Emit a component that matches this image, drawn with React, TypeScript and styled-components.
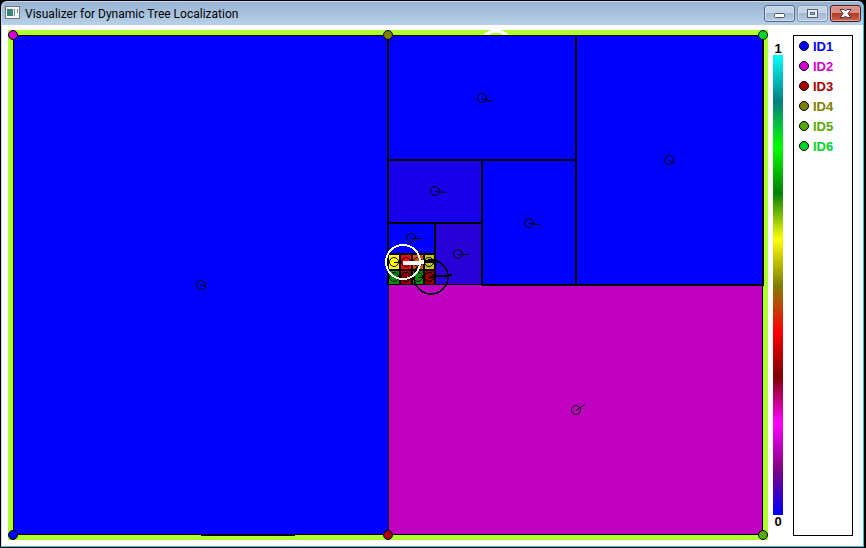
import React from "react";
import styled, { createGlobalStyle } from "styled-components";

const GlobalStyle = createGlobalStyle`
  * { box-sizing: border-box; }
  body { margin: 0; background: #000; }
`;

const Window = styled.main`
  display: flex;
  flex-direction: column;
  min-height: 100vh;
  padding: 1px 2px 1px 1px;
  background: #000;
  font-family: "Liberation Sans", Arial, sans-serif;
`;

const Frame = styled.div`
  flex: 1;
  display: flex;
  flex-direction: column;
  border: 1px solid #c4dcf2;
  border-right-color: #35bfdc;
  border-bottom-color: #35bfdc;
  border-radius: 6px 6px 0 0;
  overflow: hidden;
  background: #fff;
`;

const TitleBar = styled.header`
  display: flex;
  align-items: flex-start;
  height: 23px;
  padding: 0 2px 0 3px;
  background: linear-gradient(#98b3d1, #b7d0ea);
`;

const AppIcon = styled.svg`
  display: block;
  margin-top: 4px;
`;

const Title = styled.h1`
  flex: 1;
  margin: 0 0 0 5px;
  font: 400 12px/24px Roboto, "Open Sans", sans-serif;
  color: #000;
  white-space: nowrap;
`;

const Controls = styled.div`
  display: flex;
  gap: 2px;
  margin-top: 3px;
`;

const ControlButton = styled.button<{ $kind: "normal" | "muted" | "close" }>`
  display: grid;
  place-items: center;
  width: 31px;
  height: 17px;
  padding: 0;
  border: 1px solid ${(p) => (p.$kind === "close" ? "#4d1a20" : p.$kind === "muted" ? "#8296ae" : "#566a84")};
  border-radius: 3px;
  box-shadow: inset 0 0 0 1px ${(p) => (p.$kind === "close" ? "#dfa398" : "#cfdeee")};
  background: ${(p) =>
    p.$kind === "close"
      ? "linear-gradient(#d98f83 0 45%, #b83a26 50%, #c8634c)"
      : "linear-gradient(#c3d4e7 0 45%, #a3b9d2 50%, #b7cce3)"};
`;

const Content = styled.div`
  flex: 1;
  display: flex;
  align-items: flex-start;
  padding: 5px 10px 6px 6px;
`;

const MapArea = styled.svg`
  display: block;
  flex: 1;
  min-width: 0;
  height: auto;
`;

const Scale = styled.div`
  align-self: stretch;
  display: flex;
  flex-direction: column;
  align-items: center;
  width: 10px;
  margin: 12px 10px 12px 5px;
  font: 700 13px/13px "Liberation Sans", Arial, sans-serif;
  color: #000;
`;

const ScaleBar = styled.div`
  flex: 1;
  width: 10px;
  background: linear-gradient(
    #0ff, #008080, #0f0, #008000, #ff0, #808000, #f00, #800000, #f0f, #800080, #00f
  );
`;

const Legend = styled.ul`
  align-self: stretch;
  width: 60px;
  margin: 5px 0 4px;
  padding: 0 0 0 5px;
  border: 1px solid #000;
  list-style: none;
`;

const LegendItem = styled.li<{ $color: string }>`
  display: flex;
  align-items: center;
  gap: 4px;
  height: 20px;
  font: 700 13px/18px "Liberation Sans", Arial, sans-serif;
  color: ${(p) => p.$color};
`;

const LegendLabel = styled.span`
  padding-top: 2px;
`;

const ids = [
  { name: "ID1", color: "#0000ff" },
  { name: "ID2", color: "#d200d2" },
  { name: "ID3", color: "#aa0000" },
  { name: "ID4", color: "#808000" },
  { name: "ID5", color: "#55aa00" },
  { name: "ID6", color: "#00d52b" },
];

const anchors = [
  [13, 535, "#0000ff"],
  [13, 35, "#d200d2"],
  [388, 535, "#aa0000"],
  [388, 35, "#808000"],
  [763, 535, "#55aa00"],
  [763, 35, "#00d52b"],
] as const;

/* x, y, width, height, fill */
const cells = [
  [388, 35, 188, 125, "#0000ff"],
  [576, 35, 187, 249, "#0000ff"],
  [388, 160, 94, 62, "#1800e8"],
  [482, 160, 94, 124, "#0000ff"],
  [388, 222, 47, 32, "#0000ff"],
  [435, 222, 47, 62, "#2800d8"],
] as const;

const leaves = [
  [388, 254, "#ffff00"],
  [400, 254, "#ff0000"],
  [412, 254, "#d45500"],
  [424, 254, "#c8c800"],
  [388, 270, "#009000"],
  [400, 270, "#900000"],
  [412, 270, "#009000"],
  [424, 270, "#900000"],
] as const;

/* centre x, centre y, heading end dx, dy */
const poses = [
  [201, 285, 4, 0],
  [482, 98, 10, 3],
  [669, 160, 5, 3],
  [435, 191, 11, 1],
  [529, 223, 11, 1],
  [411, 238, 11, 0],
  [458, 254, 11, 0],
  [576, 410, 9, -6],
  [394, 262, 5, 0],
  [406, 262, 5, 0],
  [418, 262, 5, 0],
  [429, 262, 9, 0],
  [394, 277, 5, 0],
  [406, 277, 5, 0],
  [418, 277, 5, 0],
  [429, 277, 5, 0],
] as const;

function TreeMap() {
  return (
    <MapArea viewBox="8 30 760 510" role="img" aria-label="Tree localization map" shapeRendering="crispEdges">
      <rect x="8" y="30" width="760" height="510" fill="#adff2f" />
      <circle cx="496" cy="47" r="16" fill="none" stroke="#fff" strokeWidth="3" />
      <rect x="13" y="35" width="375" height="500" fill="#0000ff" />
      <rect x="388" y="285" width="375" height="250" fill="#c000c0" />
      {cells.map(([x, y, w, h, fill]) => (
        <rect key={`${x}-${y}`} x={x} y={y} width={w} height={h} fill={fill} />
      ))}
      {leaves.map(([x, y, fill]) => (
        <rect key={`${x}-${y}`} x={x} y={y} width="12" height="15" fill={fill} />
      ))}
      <path
        d="M576 35V285M388 160H577M482 160V285M388 223H483M435 222V285M388 254H436M388 270H436M400 254V285M412 254V285M424 254V285M482 285H764M763 35V286"
        fill="none"
        stroke="#000"
        strokeWidth="2"
      />
      <path d="M388 35V285" stroke="#000" strokeWidth="2" />
      <path d="M13.5 35.5H762.5V534.5H13.5ZM388.5 285V535M388 284.5H482" fill="none" stroke="#000" />
      <path d="M201 535H295" stroke="#000" strokeWidth="2" />
      {poses.map(([x, y, dx, dy]) => (
        <g key={`${x}-${y}`} fill="none" stroke="#000">
          <circle cx={x} cy={y} r="4.5" shapeRendering="auto" />
          <path d={`M${x} ${y + 0.5}l${dx} ${dy}`} shapeRendering="auto" />
        </g>
      ))}
      <circle cx="431" cy="277" r="17" fill="none" stroke="#000" strokeWidth="1.5" />
      <path d="M431 277L452 275" stroke="#000" strokeWidth="2" />
      <circle cx="403" cy="262" r="17" fill="none" stroke="#fff" strokeWidth="2" />
      <path d="M403 263H418L424 262" fill="none" stroke="#fff" strokeWidth="4" />
      <path d="M424 262H433L436 264" fill="none" stroke="#000" strokeWidth="2" />
      {anchors.map(([x, y, fill]) => (
        <circle key={`${x}-${y}`} cx={x} cy={y} r="4.5" fill={fill} stroke="#000" shapeRendering="auto" />
      ))}
    </MapArea>
  );
}

export default function App() {
  return (
    <Window>
      <GlobalStyle />
      <Frame>
        <TitleBar>
          <AppIcon width="15" height="13" viewBox="0 0 15 13" aria-hidden="true">
            <rect x=".5" y=".5" width="14" height="12" fill="#f4f4f4" stroke="#777" />
            <rect x="2" y="3" width="6" height="7" fill="#3b8378" />
            <path d="M9.5 3v7M12.5 3v4" stroke="#5d8fa8" />
          </AppIcon>
          <Title>Visualizer for Dynamic Tree Localization</Title>
          <Controls>
            <ControlButton type="button" $kind="normal" aria-label="Minimize">
              <svg width="11" height="9" viewBox="0 0 11 9">
                <rect x=".5" y="4.5" width="10" height="4" rx="1" fill="#fff" stroke="#4b5666" />
              </svg>
            </ControlButton>
            <ControlButton type="button" $kind="muted" aria-label="Maximize">
              <svg width="11" height="9" viewBox="0 0 11 9">
                <rect x=".5" y=".5" width="10" height="8" fill="#e5edf5" stroke="#56606e" />
                <rect x="3.5" y="3.5" width="4" height="2" fill="#b2c6dc" stroke="#56606e" />
              </svg>
            </ControlButton>
            <ControlButton type="button" $kind="close" aria-label="Close">
              <svg width="13" height="9" viewBox="0 0 13 9">
                <path d="M1 .5h4l1.5 1.5L8 .5h4L9 4.500l3 4H8L6.500 7 5 8.500H1l3-4z" fill="#fff" stroke="#4a3038" />
              </svg>
            </ControlButton>
          </Controls>
        </TitleBar>
        <Content>
          <TreeMap />
          <Scale>
            <span>1</span>
            <ScaleBar />
            <span>0</span>
          </Scale>
          <Legend>
            {ids.map((id) => (
              <LegendItem key={id.name} $color={id.color}>
                <svg width="10" height="10" viewBox="0 0 10 10" aria-hidden="true">
                  <circle cx="5" cy="5" r="4.5" fill={id.color} stroke="#000" />
                </svg>
                <LegendLabel>{id.name}</LegendLabel>
              </LegendItem>
            ))}
          </Legend>
        </Content>
      </Frame>
    </Window>
  );
}
